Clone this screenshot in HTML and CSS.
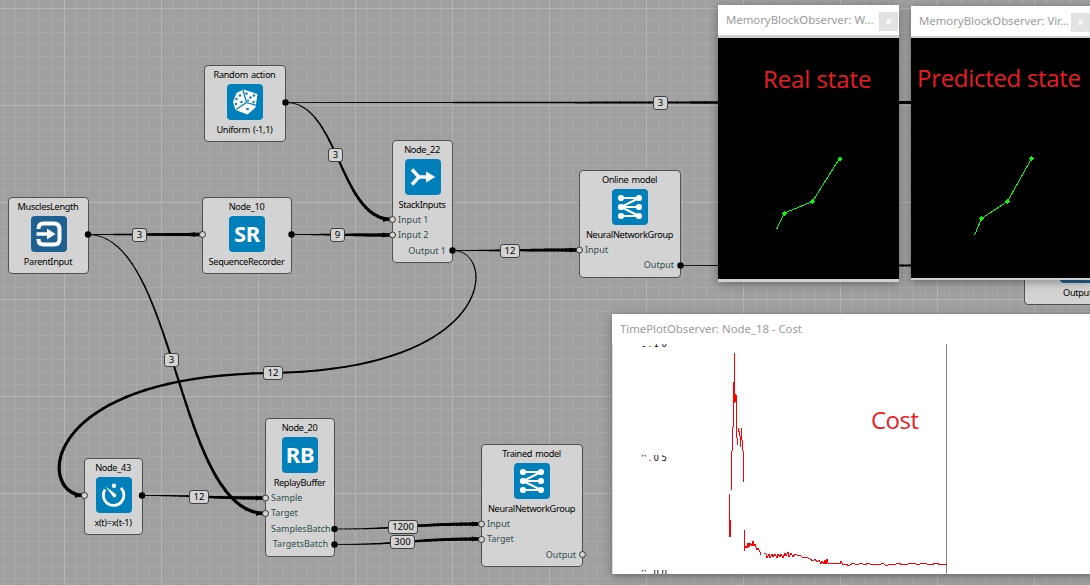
FILE: index.html
```html
<!DOCTYPE html>
<html lang="en">
<head>
<meta charset="utf-8">
<title>Node graph</title>
<link rel="stylesheet" href="styles.css">
</head>
<body>
<svg width="0" height="0" class="defs">
  <symbol id="net" viewBox="0 0 36 36">
    <g fill="none" stroke="#fff" stroke-width="2"><path d="M9 9H27M9 18H27M9 27H27M27 9L9 18L27 27"/></g>
    <g fill="#fff"><circle cx="9" cy="9" r="3.1"/><circle cx="9" cy="18" r="3.1"/><circle cx="9" cy="27" r="3.1"/><circle cx="27" cy="9" r="3.1"/><circle cx="27" cy="18" r="3.1"/><circle cx="27" cy="27" r="3.1"/></g>
  </symbol>
</svg>
<main class="canvas">
  <svg class="grid" width="1090" height="585">
    <defs><pattern id="cells" x="64" y="8" width="97" height="97" patternUnits="userSpaceOnUse">
      <path class="minor" d="M12.5 0V97M24.5 0V97M36.5 0V97M48.5 0V97M60.5 0V97M72.5 0V97M85.5 0V97M0 12.5H97M0 24.5H97M0 36.5H97M0 48.5H97M0 60.5H97M0 73.5H97M0 85.5H97"/>
      <path class="major" d="M.5 0V97M0 .5H97"/></pattern></defs>
    <rect width="1090" height="585" fill="url(#cells)"/>
  </svg>

  <section class="node n-random"><h2>Random action</h2>
    <svg class="icon" viewBox="0 0 36 36">
      <path d="M16.5 5.500L30.500 10L28.500 23.500L20.500 30.500L8.500 26L6 18L9.500 9Z" fill="#fff"/>
      <path d="M16 6L19.500 18.500L29.800 21.500M19.500 18.500L9 25.500" fill="none" stroke="#0080bb" stroke-width="1.3"/>
      <g fill="#0080bb"><circle cx="19.500" cy="9.500" r="1.200"/><circle cx="27" cy="11.500" r="1.200"/><circle cx="23.500" cy="13.500" r="1.200"/><circle cx="21" cy="16.500" r="1.100"/><circle cx="26.500" cy="18" r="1.200"/><circle cx="13" cy="11.500" r="1.200"/><circle cx="9.500" cy="15" r="1.200"/><circle cx="9" cy="20" r="1.200"/><circle cx="14.500" cy="18" r="1.200"/><ellipse cx="20.500" cy="25" rx="1.800" ry="1.100"/></g></svg>
    <p>Uniform (-1,1)</p></section>

  <section class="node n-muscles"><h2>MusclesLength</h2>
    <svg class="icon dark" viewBox="0 0 36 36"><path d="M7.500 13V12.500Q7.500 7.500 12.500 7.500H23Q28.500 7.500 28.500 13V23Q28.500 28.500 23 28.500H12.500Q7.500 28.500 7.500 23.500V23" fill="none" stroke="#fff" stroke-width="4"/><path d="M5.500 18H17" stroke="#fff" stroke-width="3.500"/><path d="M16 12.500L24.500 18L16 23.500Z" fill="#fff"/></svg>
    <p>ParentInput</p></section>

  <section class="node n-10"><h2>Node_10</h2><div class="icon letters">SR</div><p>SequenceRecorder</p></section>

  <section class="node n-22"><h2>Node_22</h2>
    <svg class="icon" viewBox="0 0 36 36"><path d="M7 10.500L14 18L7 25.500M14 18H22" fill="none" stroke="#fff" stroke-width="3.400"/><path d="M21 12.600L30.300 18L21 23.400Z" fill="#fff"/></svg>
    <p>StackInputs</p><ul><li>Input 1</li><li>Input 2</li><li class="out">Output 1</li></ul></section>

  <section class="node n-online"><h2>Online model</h2><svg class="icon"><use href="#net"/></svg><p>NeuralNetworkGroup</p><ul><li>Input</li><li class="out">Output</li></ul></section>

  <section class="node n-20"><h2>Node_20</h2><div class="icon letters">RB</div><p>ReplayBuffer</p><ul><li>Sample</li><li>Target</li><li class="out">SamplesBatch</li><li class="out">TargetsBatch</li></ul></section>

  <section class="node n-43"><h2>Node_43</h2>
    <svg class="icon" viewBox="0 0 36 36"><path d="M9 12.500A10.300 10.300 0 1 0 25 11" fill="none" stroke="#fff" stroke-width="2.800"/><circle cx="18" cy="8.700" r="2.200" fill="#fff"/><path d="M9.500 9.500L20 17.300A2 2 0 0 1 17.300 20Z" fill="#fff"/></svg>
    <p>x(t)=x(t-1)</p></section>

  <section class="node n-trained"><h2>Trained model</h2><svg class="icon"><use href="#net"/></svg><p>NeuralNetworkGroup</p><ul><li>Input</li><li>Target</li><li class="out">Output</li></ul></section>

  <section class="node n-output"><div class="icon dark"></div><p>Output</p></section>

  <svg class="wires" width="1090" height="585"><g id="wires"></g></svg>

  <section class="window w-real"><header><span>MemoryBlockObserver: W...</span><i class="close">x</i></header>
    <div class="view"><svg width="181" height="241" shape-rendering="crispEdges"><g transform="translate(-718 -38)" fill="#0f0"><path class="arm" d="M776.500 229.500L784.500 213L812.500 201.500L839.500 158.500"/><path d="M782 213.500L784.500 211L787 213.500L784.500 216ZM810 201.500L812.500 199L815 201.500L812.500 204ZM837 159L839.500 156.500L842 159L839.500 161.500Z"/></g></svg>
    <b class="caption">Real state</b></div></section>

  <section class="window w-pred"><header><span>MemoryBlockObserver: Vir...</span><i class="close">x</i></header>
    <div class="view"><svg width="181" height="240" shape-rendering="crispEdges"><g transform="translate(-911 -38)" fill="#0f0"><path class="arm" d="M974.500 235.500L981.500 218.500L1007.500 201.500L1031.500 158.500"/><path d="M979 218.500L981.500 216L984 218.500L981.500 221ZM1005 201.500L1007.500 199L1010 201.500L1007.500 204ZM1029 158.500L1031.500 156L1034 158.500L1031.500 161Z"/></g></svg>
    <b class="caption">Predicted state</b></div></section>

  <section class="window w-cost"><header><span>TimePlotObserver: Node_18 - Cost</span></header>
    <div class="plot"><svg width="478" height="230" viewBox="612 344 478 230">
      <defs><clipPath id="ticks"><path d="M640 346H648V347H640ZM648 344H670V348H648ZM640 455H648V456.500H640ZM648 455H670V462H648ZM640 570H648V571.500H640ZM648 570H670V574H648Z"/></clipPath></defs>
      <g class="tick" clip-path="url(#ticks)"><text x="641 648.500 653.500 661.500" y="347">0.10</text><text x="641 648.500 653.500 661.500" y="461">0.05</text><text x="641 648.500 653.500 661.500" y="576">0.00</text></g>
      <path d="M612.500 344V574" stroke="#ddd"/><path d="M946.500 344V574" stroke="#888"/>
      <g shape-rendering="crispEdges"><path class="cost" d="M729.500 494V537M730.500 520V537M731.500 451V490M732.500 427V451M733.500 382V427M734.500 353V403M735.500 394V402M736.500 395V438M737.500 438V445M738.500 428V432M739.500 431V436M740.500 436V447M741.500 428V440M742.500 440V451M743.500 451V482M744.500 530V551"/>
      <polyline class="cost" points="744,550 746,546 747,548 748,543 749,547 750,543 752,546 753,541 754,546 755,544 757,550 758,548 760,552 761,555"/>
      <polyline class="cost" points="764.500,553.500 766,554 767,558 769,554 770,558 772,554 773,557 775,554 777,558 778,554 780,557 781,554 783,558 785,553 786,556 788,552 789,557 791,553 793,557 795,554 797,555 800,555 803,558 806,557 810,559 813,561 815,559 817,562 819,560 821,564 822,561 824,564 825,560 826,564 827,559 828,563 834,563.500 840,564 841,561 843,565 846,564 849,566 853,563 857,565 861,563 865,565 868,563 872,565 875,564 879,565 883,563 886,566 890,564 894,565 898,563 903,565 908,564 914,563 918,565 922,563 927,564 931,565 936,563 941,565 947,564"/></g>
    </svg><b class="caption">Cost</b></div></section>
</main>
<script src="script.js"></script>
</body>
</html>
```

FILE: styles.css
```css
* { box-sizing: border-box; }
body { margin: 0; overflow: hidden; font-family: "Noto Sans", "Open Sans", sans-serif; }
.defs { position: absolute; }
.canvas { position: relative; width: 1090px; height: 585px; overflow: hidden; background: #a0a0a0; }
.grid, .wires { position: absolute; left: 0; top: 0; }
.minor { stroke: #a9a9a9; }
.major { stroke: #b5b5b5; }

.node { position: absolute; height: 77px; padding-top: 1px; background: #d3d3d3; border: 1px solid #505050; border-radius: 4px; font-size: 9px; color: #000; text-align: center; white-space: nowrap; }
.node h2, .node p { margin: 0 -10px; font-size: 9.2px; font-weight: 400; height: 16.5px; line-height: 15px; letter-spacing: -.33px; word-spacing: 1px; }
.node h2 { position: relative; left: -.5px; }
.node p { line-height: 19px; height: 17px; position: relative; left: -.5px; }
.icon { display: block; width: 36px; height: 36px; margin: 0 auto; border-radius: 4px; background: #0080bb; }
.icon.dark { background: #1f6092; }
.letters { color: #fff; font: 700 22px/35px "Noto Sans", sans-serif; letter-spacing: -.3px; }
.node ul { list-style: none; margin: 0; padding: 0 6px 0 5px; }
.node li { height: 15.5px; line-height: 15.5px; text-align: left; color: #2f4f4f; }
.node .out { text-align: right; }

.n-random { left: 204px; top: 65px; width: 82px; }
.n-muscles { left: 8px; top: 197px; width: 81px; }
.n-10 { left: 202px; top: 197px; width: 90px; }
.n-22 { left: 392px; top: 140px; width: 61px; height: 123px; }
.n-online { left: 579px; top: 170px; width: 102px; height: 108px; }
.n-20 { left: 265px; top: 418px; width: 70px; height: 139px; }
.n-43 { left: 84px; top: 458px; width: 59px; }
.n-trained { left: 481px; top: 444px; width: 102px; height: 123px; }
.n-output { left: 1024px; top: 228px; width: 108px; padding-top: 18px; }

.wire { fill: none; stroke: #000; }
.arrow, .port-out { fill: #000; }
.port-in { fill: #d3d3d3; stroke: #333; }
.tag rect { fill: #d3d3d3; stroke: #404040; }
.tag text { font: 9.5px "Noto Sans", sans-serif; text-anchor: middle; }

.window { position: absolute; background: #d0d0d0; box-shadow: 0 2px 9px rgba(0,0,0,.36); }
.window header { display: flex; align-items: center; justify-content: space-between; height: 30px; padding: 0 1px 1px 8px; background: #fff; color: #9b9b9b; font-size: 11.4px; letter-spacing: -.03px; white-space: nowrap; }
.close { width: 19px; height: 19px; margin-top: 4px; background: #e2e2e2; color: #fff; font: 700 9px/18px "Noto Sans", sans-serif; text-align: center; }
.view { position: relative; margin-top: 3px; background: #000; }
.view svg, .plot svg { display: block; }
.w-real { left: 718px; top: 5px; width: 181px; height: 277px; }
.w-pred { left: 911px; top: 6px; width: 180px; height: 274px; }
.w-pred .view { margin-top: 2px; }
.w-cost { left: 612px; top: 314px; width: 490px; height: 260px; background: #fff; }
.arm { fill: none; stroke: #0f0; }
.cost { fill: none; stroke: #f00; }
.tick { font: 8.500px "DejaVu Sans", sans-serif; }
.plot { position: relative; }
.caption { position: absolute; color: #ed1c24; font: 400 24px/30px "Open Sans", sans-serif; letter-spacing: -.1px; white-space: nowrap; }
.w-real .caption { left: 45px; top: 26px; }
.w-pred .caption { left: 6px; top: 25px; letter-spacing: -.3px; }
.w-cost .caption { left: 259px; top: 61px; letter-spacing: -.5px; }
```

FILE: script.js
```js
const NS = 'http://www.w3.org/2000/svg';
const layer = document.getElementById('wires');

function add(parent, name, attrs, text) {
  const el = document.createElementNS(NS, name);
  for (const key in attrs) el.setAttribute(key, attrs[key]);
  if (text) el.textContent = text;
  parent.appendChild(el);
  return el;
}

// Each wire: list of chained cubic segments [x0,y0,x1,y1,x2,y2,x3,y3], thickening toward its target.
function wire(curves, arrow = true) {
  const pts = [];
  curves.forEach(c => {
    for (let i = 0; i <= 40; i++) {
      const t = i / 40, u = 1 - t;
      pts.push([0, 1].map(k => u*u*u*c[k] + 3*u*u*t*c[k+2] + 3*u*t*t*c[k+4] + t*t*t*c[k+6]));
    }
  });
  const n = pts.length - 1;
  for (let i = 0; i < n; i++) {
    add(layer, 'path', { class: 'wire', 'stroke-linecap': 'round', 'stroke-width': (0.8 + 2.7 * i / n).toFixed(2),
      d: `M${pts[i]}L${pts[i + 1]}` });
  }
  if (arrow) {
    const [x, y] = pts[n];
    add(layer, 'path', { class: 'arrow', d: `M${x-9} ${y-2.5}L${x-2} ${y}L${x-9} ${y+2.5}Z` });
  }
}
function link(x0, y0, x3, y3, arrow) {
  const d = (x3 - x0) / 2;
  wire([[x0, y0, x0 + d, y0, x3 - d, y3, x3, y3]], arrow);
}

link(286, 102.5, 1040, 102.5, false);
link(286, 102.5, 392, 219.5);
link(88, 234.5, 202, 234.5);
link(88, 234.5, 265, 513.5);
link(292, 234.5, 392, 235);
link(453, 250.5, 579, 250);
link(680, 265.5, 1110, 265.5, false);
link(142, 495.5, 265, 498);
link(335, 529, 481, 524);
link(335, 544.5, 481, 539);
wire([[453, 250.5, 497, 250.5, 498, 370, 270, 373], [270, 373, 36, 376, 37, 495.5, 84, 495.5]]);

[[392,219.5],[392,235],[202,234.5],[579,250],[265,498],[265,513.5],[84,495.5],[481,524],[481,539.5],[582,554.5]]
  .forEach(([x, y]) => add(layer, 'circle', { class: 'port-in', cx: x + .5, cy: y, r: 3 }));
[[285.5,102.5],[88,234.5],[291.5,234.5],[452.5,250.5],[680.5,265.5],[142,495.5],[334.5,529],[334.5,544.5]]
  .forEach(([x, y]) => add(layer, 'circle', { class: 'port-out', cx: x, cy: y, r: 3.2 }));

[['3',660,103,14],['3',335,155,14],['3',139.5,235,14],['9',337.5,235,14],['12',510,250.5,19],['3',171,360,14],
 ['12',273,373,19],['12',198.5,497,19],['1200',403,527,29],['300',402.5,542,24]]
  .forEach(([label, x, y, w]) => {
    const left = Math.floor(x - w / 2) + .5;
    const g = add(layer, 'g', { class: 'tag' });
    add(g, 'rect', { x: left, y: Math.round(y - 7) + .5, width: w, height: 13, rx: 2.5 });
    add(g, 'text', { x: left + w / 2, y: y + 3.3 }, label);
  });
```
